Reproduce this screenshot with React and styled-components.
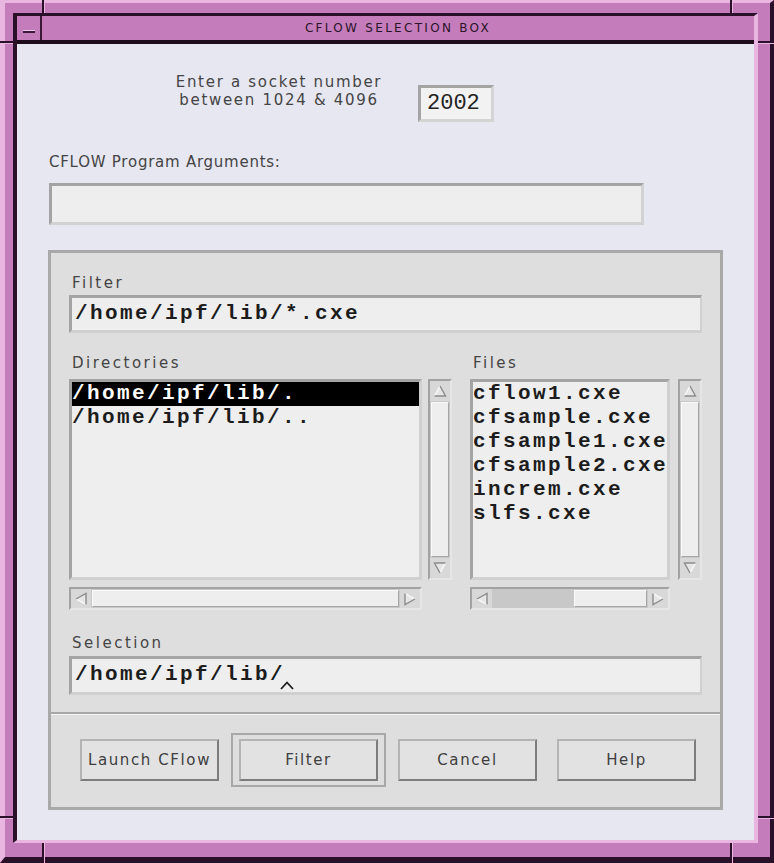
import React from 'react';
import styled, { createGlobalStyle } from 'styled-components';

// Motif-ish palette, eyeballed from the screenshot
const C = {
  pink: '#c57cbb',
  pinkLight: '#e9b6e2',
  pinkDark: '#2a1028',
  lavender: '#e7e7f1',
  panel: '#dedede',
  field: '#eeeeee',
  shadow: '#a4a4a4',
  hilite: '#f6f6f6',
  trough: '#c8c8c8',
  text: '#1c1c1c',
  label: '#444444',
};

const SANS = '"DejaVu Sans", "Liberation Sans", sans-serif';
const MONO = '"Liberation Mono", "DejaVu Sans Mono", monospace';

const GlobalStyle = createGlobalStyle`
  html, body {
    margin: 0;
    padding: 0;
    background: ${C.pink};
  }
  body {
    width: 774px;
    height: 863px;
    overflow: hidden;
    font-family: ${SANS};
  }
`;

///////////////////////////////////////////////////////////////////////////////
// Window frame

const Frame = styled.div`
  position: relative;
  box-sizing: border-box;
  width: 774px;
  height: 863px;
  background: ${C.pink};
  border-style: solid;
  border-width: 3px 4px 6px 5px;
  border-color: ${C.pinkLight} ${C.pinkDark} ${C.pinkDark} ${C.pinkLight};
  padding: 10px 12px 14px 8px;
`;

const FrameInner = styled.div`
  box-sizing: border-box;
  height: 100%;
  display: flex;
  flex-direction: column;
  border-style: solid;
  border-width: 3px 4px 3px 4px;
  border-color: ${C.pinkDark} ${C.pinkLight} ${C.pinkLight} ${C.pinkDark};
`;

// resize-handle notches cut into the frame border
const Tick = styled.span`
  position: absolute;
  left: ${({ $x }) => $x}px;
  top: ${({ $y }) => $y}px;
  box-sizing: border-box;
  width: ${({ $v, $len }) => ($v ? 3 : $len)}px;
  height: ${({ $v, $len }) => ($v ? $len : 3)}px;
  ${({ $v }) =>
    $v
      ? `border-left: 2px solid ${C.pinkDark}; border-right: 1px solid ${C.pinkLight};`
      : `border-top: 2px solid ${C.pinkDark}; border-bottom: 1px solid ${C.pinkLight};`}
`;

const TitleBar = styled.div`
  display: flex;
  height: 24px;
  flex: 0 0 24px;
  background: ${C.pink};
  border-bottom: 4px solid #1e0b1c;
`;

const MenuButton = styled.div`
  width: 25px;
  border-right: 2px solid #3a1838;
  display: flex;
  justify-content: center;
  padding-top: 14px;
  box-sizing: border-box;
`;

const Dash = styled.span`
  width: 12px;
  height: 2px;
  background: #3a1838;
  border-top: 1px solid #f0c8ec;
`;

const Title = styled.div`
  flex: 1;
  text-align: center;
  font-family: ${SANS};
  font-size: 12px;
  letter-spacing: 2.3px;
  line-height: 24px;
  color: #2a1428;
`;

const Content = styled.div`
  flex: 1;
  background: ${C.lavender};
  padding-top: 29px;
  display: flex;
  flex-direction: column;
`;

///////////////////////////////////////////////////////////////////////////////
// Top part: socket number + program arguments

const SocketRow = styled.div`
  display: flex;
  align-items: flex-start;
  padding-left: 152px;
  gap: 29px;
`;

const SocketPrompt = styled.div`
  width: 220px;
  text-align: center;
  font-family: ${SANS};
  font-size: 15px;
  letter-spacing: 1.7px;
  line-height: 18px;
  color: ${C.label};
`;

const SocketField = styled.div`
  box-sizing: border-box;
  width: 76px;
  height: 37px;
  margin-top: 12px;
  padding-left: 6px;
  background: #f2f2f2;
  border: 3px solid;
  border-color: ${C.shadow} #d4d4d4 #d4d4d4 ${C.shadow};
  font-family: ${MONO};
  font-size: 22px;
  line-height: 31px;
  color: #222;
`;

const ArgsLabel = styled.div`
  margin: 32px 0 0 32px;
  font-family: ${SANS};
  font-size: 15px;
  letter-spacing: 0.75px;
  line-height: 16px;
  color: ${C.label};
`;

const ArgsField = styled.div`
  box-sizing: border-box;
  width: 595px;
  height: 42px;
  margin: 13px 0 0 32px;
  background: ${C.field};
  border: 3px solid;
  border-color: ${C.shadow} #d2d2d2 #d2d2d2 ${C.shadow};
`;

///////////////////////////////////////////////////////////////////////////////
// File selection box

const SelectionPanel = styled.div`
  box-sizing: border-box;
  width: 675px;
  height: 560px;
  margin: 25px 0 0 31px;
  padding: 22px 18px 0 18px;
  background: ${C.panel};
  border: 3px solid #a9a9a9;
  display: flex;
  flex-direction: column;
`;

const FieldLabel = styled.div`
  margin-left: 3px;
  margin-top: ${({ $gap }) => $gap || 0}px;
  font-family: ${SANS};
  font-size: 15px;
  letter-spacing: 2.5px;
  line-height: 16px;
  color: ${C.label};
`;

const TextField = styled.div`
  box-sizing: border-box;
  height: ${({ $h }) => $h}px;
  margin-top: ${({ $gap }) => $gap}px;
  padding: 4px 3px 0;
  background: ${C.field};
  border-style: solid;
  border-width: 3px 2px 3px 3px;
  border-color: ${C.shadow} #d0d0d0 #d0d0d0 ${C.shadow};
  font-family: ${MONO};
  font-weight: bold;
  font-size: 21px;
  letter-spacing: 2.4px;
  line-height: 24px;
  color: ${C.text};
  white-space: pre;
`;

const Caret = styled.svg`
  vertical-align: -10px;
  margin-left: -5px;
`;

const ListsRow = styled.div`
  display: flex;
  gap: 18px;
  margin-top: 22px;
`;

const ListColumn = styled.div`
  display: flex;
  flex-direction: column;
  width: ${({ $w }) => $w}px;
`;

const ListWithBar = styled.div`
  display: flex;
  gap: ${({ $gap }) => $gap}px;
  margin-top: 8px;
`;

const ListBox = styled.div`
  box-sizing: border-box;
  width: ${({ $w }) => $w}px;
  height: 201px;
  background: ${C.field};
  border: 3px solid;
  border-color: ${C.shadow} #d0d0d0 #d0d0d0 ${C.shadow};
  overflow: hidden;
`;

const ListItem = styled.div`
  height: 24px;
  font-family: ${MONO};
  font-weight: bold;
  font-size: 21px;
  letter-spacing: 2.4px;
  line-height: 24px;
  white-space: pre;
  background: ${({ $selected }) => ($selected ? '#000' : 'transparent')};
  color: ${({ $selected }) => ($selected ? '#fff' : C.text)};
`;

const HBarSlot = styled.div`
  margin-top: 7px;
`;

const Separator = styled.div`
  margin: 17px -18px 0;
  height: 0;
  border-top: 2px solid #a8a8a8;
  border-bottom: 1px solid ${C.hilite};
`;

const ButtonRow = styled.div`
  display: flex;
  align-items: center;
  gap: 20px;
  height: 54px;
  margin-top: 18px;
  padding-left: 11px;
`;

const DefaultRing = styled.div`
  margin: 0 -8px;
  padding: 4px 6px;
  border: 2px solid #a8a8a8;
`;

const PushButton = styled.div`
  box-sizing: border-box;
  width: 139px;
  height: 42px;
  display: flex;
  align-items: center;
  justify-content: center;
  background: #e2e2e2;
  border: 2px solid;
  border-color: #b4b4b4 #7c7c7c #7c7c7c #b4b4b4;
  font-family: ${SANS};
  font-size: 15px;
  letter-spacing: 1.6px;
  color: #3e3e3e;
`;

///////////////////////////////////////////////////////////////////////////////
// Scroll bars

const ScrollTrack = styled.div`
  box-sizing: border-box;
  display: flex;
  flex-direction: ${({ $vertical }) => ($vertical ? 'column' : 'row')};
  width: ${({ $vertical, $length }) => ($vertical ? 24 : $length)}px;
  height: ${({ $vertical, $length }) => ($vertical ? $length : 23)}px;
  background: ${C.trough};
  border: 2px solid;
  border-color: #a2a2a2 #e6e6e6 #e6e6e6 #a2a2a2;
`;

const ArrowBox = styled.div`
  flex: 0 0 20px;
  display: flex;
  align-items: center;
  justify-content: center;
  background: #d8d8d8;
`;

const Slot = styled.div`
  flex: 1;
  display: flex;
  flex-direction: ${({ $vertical }) => ($vertical ? 'column' : 'row')};
  padding: 1px;
`;

const Gap = styled.div`
  flex: ${({ $grow }) => $grow} 1 0;
`;

const Thumb = styled.div`
  flex: ${({ $grow }) => $grow} 1 0;
  background: #eeeeee;
  border: 1px solid;
  border-color: #fafafa #a6a6a6 #a6a6a6 #fafafa;
`;

const ROT = { up: 0, right: 90, down: 180, left: 270 };

const Arrow = ({ dir }) => (
  <svg width="14" height="14" viewBox="0 0 14 14" style={{ transform: `rotate(${ROT[dir]}deg)` }}>
    <polygon points="7,2 12.5,12 1.5,12" fill="#e6e6e6" />
    <polyline points="1.5,12 7,2" fill="none" stroke="#fafafa" strokeWidth="1.4" />
    <polyline points="7,2 12.5,12 1.5,12" fill="none" stroke="#8c8c8c" strokeWidth="1.4" />
  </svg>
);

const ScrollBar = ({ vertical, length, start = 0, size = 1 }) => (
  <ScrollTrack $vertical={vertical} $length={length}>
    <ArrowBox>
      <Arrow dir={vertical ? 'up' : 'left'} />
    </ArrowBox>
    <Slot $vertical={vertical}>
      {start > 0 && <Gap $grow={start} />}
      <Thumb $grow={size} />
      {start + size < 1 && <Gap $grow={1 - start - size} />}
    </Slot>
    <ArrowBox>
      <Arrow dir={vertical ? 'down' : 'right'} />
    </ArrowBox>
  </ScrollTrack>
);

///////////////////////////////////////////////////////////////////////////////

const directories = ['/home/ipf/lib/.', '/home/ipf/lib/..'];
const files = ['cflow1.cxe', 'cfsample.cxe', 'cfsample1.cxe', 'cfsample2.cxe', 'increm.cxe', 'slfs.cxe'];

const ticks = [
  { v: true, x: 37, y: -3, len: 13 },
  { v: true, x: 725, y: -3, len: 13 },
  { v: true, x: 37, y: 840, len: 20 },
  { v: true, x: 725, y: 840, len: 20 },
  { v: false, x: -5, y: 38, len: 13 },
  { v: false, x: 753, y: 38, len: 16 },
  { v: false, x: -5, y: 813, len: 13 },
  { v: false, x: 753, y: 813, len: 16 },
];

export default function App() {
  return (
    <>
      <GlobalStyle />
      <Frame>
        {ticks.map((t, i) => (
          <Tick key={i} $v={t.v} $x={t.x} $y={t.y} $len={t.len} />
        ))}
        <FrameInner>
          <TitleBar>
            <MenuButton>
              <Dash />
            </MenuButton>
            <Title>CFLOW SELECTION BOX</Title>
          </TitleBar>

          <Content>
            <SocketRow>
              <SocketPrompt>
                Enter a socket number
                <br />
                between 1024 &amp; 4096
              </SocketPrompt>
              <SocketField>2002</SocketField>
            </SocketRow>

            <ArgsLabel>CFLOW Program Arguments:</ArgsLabel>
            <ArgsField />

            <SelectionPanel>
              <FieldLabel>Filter</FieldLabel>
              <TextField $h={38} $gap={4}>/home/ipf/lib/*.cxe</TextField>

              <ListsRow>
                <ListColumn $w={383}>
                  <FieldLabel>Directories</FieldLabel>
                  <ListWithBar $gap={6}>
                    <ListBox $w={353}>
                      {directories.map((d, i) => (
                        <ListItem key={d} $selected={i === 0}>{d}</ListItem>
                      ))}
                    </ListBox>
                    <ScrollBar vertical length={201} />
                  </ListWithBar>
                  <HBarSlot>
                    <ScrollBar length={353} />
                  </HBarSlot>
                </ListColumn>

                <ListColumn $w={232}>
                  <FieldLabel>Files</FieldLabel>
                  <ListWithBar $gap={8}>
                    <ListBox $w={200}>
                      {files.map((f) => (
                        <ListItem key={f}>{f}</ListItem>
                      ))}
                    </ListBox>
                    <ScrollBar vertical length={201} />
                  </ListWithBar>
                  <HBarSlot>
                    <ScrollBar length={200} start={0.53} size={0.47} />
                  </HBarSlot>
                </ListColumn>
              </ListsRow>

              <FieldLabel $gap={25}>Selection</FieldLabel>
              <TextField $h={39} $gap={5}>
                /home/ipf/lib/
                <Caret width="14" height="9" viewBox="0 0 14 9">
                  <polyline points="1,8 7,1.5 13,8" fill="none" stroke="#1c1c1c" strokeWidth="1.8" />
                </Caret>
              </TextField>

              <Separator />

              <ButtonRow>
                <PushButton>Launch CFlow</PushButton>
                <DefaultRing>
                  <PushButton>Filter</PushButton>
                </DefaultRing>
                <PushButton>Cancel</PushButton>
                <PushButton>Help</PushButton>
              </ButtonRow>
            </SelectionPanel>
          </Content>
        </FrameInner>
      </Frame>
    </>
  );
}
